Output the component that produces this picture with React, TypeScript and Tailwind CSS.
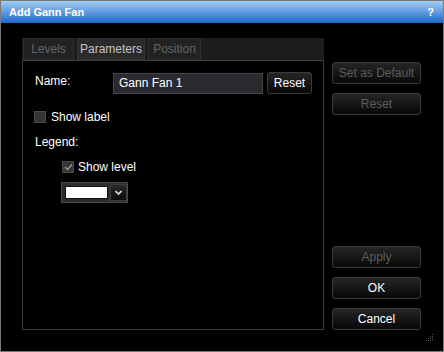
const font = { fontFamily: '"Liberation Sans", Arial, sans-serif' };

function Btn({ label, disabled, className = "" }: { label: string; disabled?: boolean; className?: string }) {
  return (
    <button
      className={`flex h-[22px] items-center justify-center rounded-[3px] border border-[#3a3a3a] bg-gradient-to-b from-[#262626] to-[#080808] text-[12px] font-normal ${
        disabled ? "text-[#5c5c5c]" : "text-white"
      } ${className}`}
    >
      {label}
    </button>
  );
}

function Check({ checked }: { checked?: boolean }) {
  return (
    <div className="flex h-[12px] w-[12px] items-center justify-center border border-[#4a4a4a] bg-[#353535]">
      {checked && (
        <svg width="9" height="8" viewBox="0 0 9 8">
          <path d="M1 4 L3.5 6.5 L8 1.5" stroke="#9a9a9a" strokeWidth="1.4" fill="none" />
        </svg>
      )}
    </div>
  );
}

export default function App() {
  return (
    <div style={font} className="h-[352px] w-[444px] overflow-hidden border border-[#7a7a7a] bg-black text-[12px] leading-[18px] text-white">
      {/* TITLE */}
      <div className="flex h-[22px] items-center justify-between bg-gradient-to-b from-[#a2cdf2] to-[#1867cc] pl-[8px] pr-[9px]">
        <span className="text-[11px] font-bold">Add Gann Fan</span>
        <span className="text-[11px] font-bold">?</span>
      </div>

      {/* BODY */}
      <div className="flex h-[328px]">
        <div className="pl-[21px] pt-[15px]">
          <div className="flex h-[22px] w-[302px] gap-[3px] bg-[#1c1c1e] pl-[1px]">
            <div className="flex w-[51px] items-center justify-center border border-[#2e2e2e] bg-[#222] text-[#626262]">Levels</div>
            <div className="flex w-[68px] items-center justify-center border border-[#333] bg-[#2a2a2a] text-[#c4c4c4]">Parameters</div>
            <div className="flex w-[53px] items-center justify-center border border-[#2e2e2e] bg-[#222] text-[#626262]">Position</div>
          </div>
          <div className="h-[270px] w-[302px] border border-[#3c3c44] pl-[12px] pt-[11px]">
            <div className="flex items-center">
              <span className="mb-[4px] w-[78px]">Name:</span>
              <div className="flex h-[21px] w-[150px] items-center border border-[#464646] bg-[#2a2b30] pl-[5px]">Gann Fan 1</div>
              <Btn label="Reset" className="ml-[4px] w-[45px] h-[21px]" />
            </div>
            <div className="mt-[14px] flex items-center gap-[5px] -ml-[1px]">
              <Check />
              <span>Show label</span>
            </div>
            <div className="mt-[7px]">Legend:</div>
            <div className="ml-[27px] mt-[7px] flex items-center gap-[4px]">
              <Check checked />
              <span>Show level</span>
            </div>
            <div className="ml-[26px] mt-[6px] flex h-[21px] w-[67px] items-center border border-[#4a4a4a] bg-[#2c2c2c] pl-[3px]">
              <div className="h-[13px] w-[43px] border border-[#111] bg-white" />
              <div className="ml-[2px] flex h-[17px] w-[17px] items-center justify-center border border-[#3e3e3e] bg-gradient-to-b from-[#2a2a2a] to-[#0c0c0c]">
                <svg width="7" height="5" viewBox="0 0 7 5">
                  <path d="M0.5 1 L3.5 4 L6.5 1" stroke="#e0e0e0" strokeWidth="1.6" fill="none" />
                </svg>
              </div>
            </div>
          </div>
        </div>

        <div className="ml-[8px] flex flex-col pb-[21px] pt-[39px]">
          <Btn label="Set as Default" disabled className="w-[89px]" />
          <Btn label="Reset" disabled className="mt-[9px] w-[89px]" />
          <div className="flex-1" />
          <Btn label="Apply" disabled className="w-[89px]" />
          <Btn label="OK" className="mt-[9px] w-[89px]" />
          <Btn label="Cancel" className="mt-[9px] w-[89px]" />
        </div>
        <div className="flex flex-1 items-end justify-end pb-[10px] pr-[9px]">
          <svg width="8" height="7" viewBox="0 0 8 7">
            <g fill="#555">
              <rect x="6" y="0" width="1" height="1" />
              <rect x="4" y="2" width="1" height="1" />
              <rect x="6" y="2" width="1" height="1" />
              <rect x="2" y="4" width="1" height="1" />
              <rect x="4" y="4" width="1" height="1" />
              <rect x="6" y="4" width="1" height="1" />
              <rect x="0" y="6" width="1" height="1" />
              <rect x="2" y="6" width="1" height="1" />
              <rect x="4" y="6" width="1" height="1" />
              <rect x="6" y="6" width="1" height="1" />
            </g>
          </svg>
        </div>
      </div>
    </div>
  );
}
